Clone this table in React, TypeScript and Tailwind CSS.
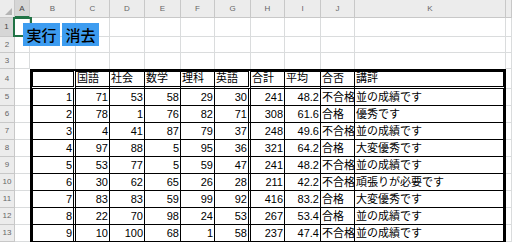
import React from "react";

const cols = ["A", "B", "C", "D", "E", "F", "G", "H", "I", "J", "K", ""];
// row heights for the sheet rows 1..13
const rowHeights = [19, 16, 16, 20, 17, 17, 17, 17, 17, 17, 17, 17, 17];

const headers = ["", "国語", "社会", "数学", "理科", "英語", "合計", "平均", "合否", "講評"];

const data: (string | number)[][] = [
  [1, 71, 53, 58, 29, 30, 241, "48.2", "不合格", "並の成績です"],
  [2, 78, 1, 76, 82, 71, 308, "61.6", "合格", "優秀です"],
  [3, 4, 41, 87, 79, 37, 248, "49.6", "不合格", "並の成績です"],
  [4, 97, 88, 5, 95, 36, 321, "64.2", "合格", "大変優秀です"],
  [5, 53, 77, 5, 59, 47, 241, "48.2", "不合格", "並の成績です"],
  [6, 30, 62, 65, 26, 28, 211, "42.2", "不合格", "頑張りが必要です"],
  [7, 83, 83, 59, 99, 92, 416, "83.2", "合格", "大変優秀です"],
  [8, 22, 70, 98, 24, 53, 267, "53.4", "合格", "並の成績です"],
  [9, 10, 100, 68, 1, 58, 237, "47.4", "不合格", "並の成績です"],
];

function cellClass(row: number, col: number) {
  // col: 0 = A, 1 = B ... 10 = K, 11 = L
  const inTable = row >= 4 && col >= 1 && col <= 10;
  let cls = "flex items-end overflow-hidden whitespace-nowrap border-r border-b pb-[1px] bg-white";
  if (inTable) {
    cls += " border-black";
    if (col === 1) cls += " border-l-[3px]";
    if (row === 4) cls += " border-t-[3px] border-b-[3px] [border-bottom-style:double]";
    if (col === 1 || col === 6) cls += " border-r-[3px] [border-right-style:double]";
    if (col === 10) cls += " border-r-[3px]";
    if (row === 4 || col >= 9) cls += " justify-start pl-[1px]";
    else cls += " justify-end pr-[1px]";
  } else if (row >= 4 && col === 0) {
    cls += " border-r-0 border-b-[#dadcdd]";
  } else if (row === 3 && col >= 1 && col <= 10) {
    cls += " border-b-0 border-r-[#dadcdd]";
  } else {
    cls += " border-[#dadcdd]";
  }
  return cls;
}

function cellText(row: number, col: number) {
  if (row === 4 && col >= 1 && col <= 10) return headers[col - 1];
  if (row >= 5 && row <= 13 && col >= 1 && col <= 10) return String(data[row - 5][col - 1]);
  return "";
}

export default function App() {
  return (
    <div
      className="relative h-[242px] w-[512px] overflow-hidden bg-white text-black"
      style={{ fontFamily: '"Liberation Sans", "Noto Sans CJK JP", sans-serif' }}
    >
      <div className="grid grid-cols-[15px_15px_46px_34px_35px_36px_34px_36px_34px_36px_34px_151px_6px]">
        {/* column header */}
        <div className="flex h-[18px] items-end justify-end border-r border-b border-[#c8c8c8] bg-[#ececec] p-[2px]">
          <svg width="7" height="7" viewBox="0 0 7 7">
            <polygon points="7,0 7,7 0,7" fill="#b4b4b4" />
          </svg>
        </div>
        {cols.map((c, i) => (
          <div
            key={i}
            className={
              c === "A"
                ? "flex h-[18px] items-center justify-center border-r border-b-2 border-r-[#c8c8c8] border-b-[#217346] bg-[#d6d6d6] pt-[2px] text-[8px] text-[#444]"
                : "flex h-[18px] items-center justify-center border-r border-b border-[#c8c8c8] bg-[#ececec] text-[8px] text-[#666]"
            }
          >
            {c}
          </div>
        ))}

        {rowHeights.map((h, ri) => {
          const row = ri + 1;
          return (
            <React.Fragment key={row}>
              <div
                style={{ height: h }}
                className={
                  row === 1
                    ? "flex items-center justify-center border-r-2 border-b border-r-[#217346] border-b-[#c8c8c8] bg-[#d6d6d6] text-[8px] text-[#444]"
                    : "flex items-center justify-center border-r border-b border-[#c8c8c8] bg-[#ececec] text-[8px] text-[#666]"
                }
              >
                {row}
              </div>
              {cols.map((c, ci) => (
                <div key={ci} style={{ height: h }} className={cellClass(row, ci)}>
                  <span className="text-[11px] leading-[13px]">{cellText(row, ci)}</span>
                </div>
              ))}
            </React.Fragment>
          );
        })}
      </div>

      {/* active cell A1 */}
      <div className="absolute left-[13px] top-[17px] h-[20px] w-[19px] border-2 border-[#217346]" />

      {/* macro buttons */}
      <div className="absolute left-[23px] top-[23px] flex gap-[2px]">
        <div
          className="flex h-[23px] w-[37px] items-center justify-center bg-[#3d9cf0] text-[15px] font-medium leading-none text-black"
          style={{ fontFamily: '"Noto Sans CJK JP", sans-serif' }}
        >
          実行
        </div>
        <div
          className="flex h-[23px] w-[37px] items-center justify-center bg-[#3d9cf0] text-[15px] font-medium leading-none text-black"
          style={{ fontFamily: '"Noto Sans CJK JP", sans-serif' }}
        >
          消去
        </div>
      </div>
    </div>
  );
}
